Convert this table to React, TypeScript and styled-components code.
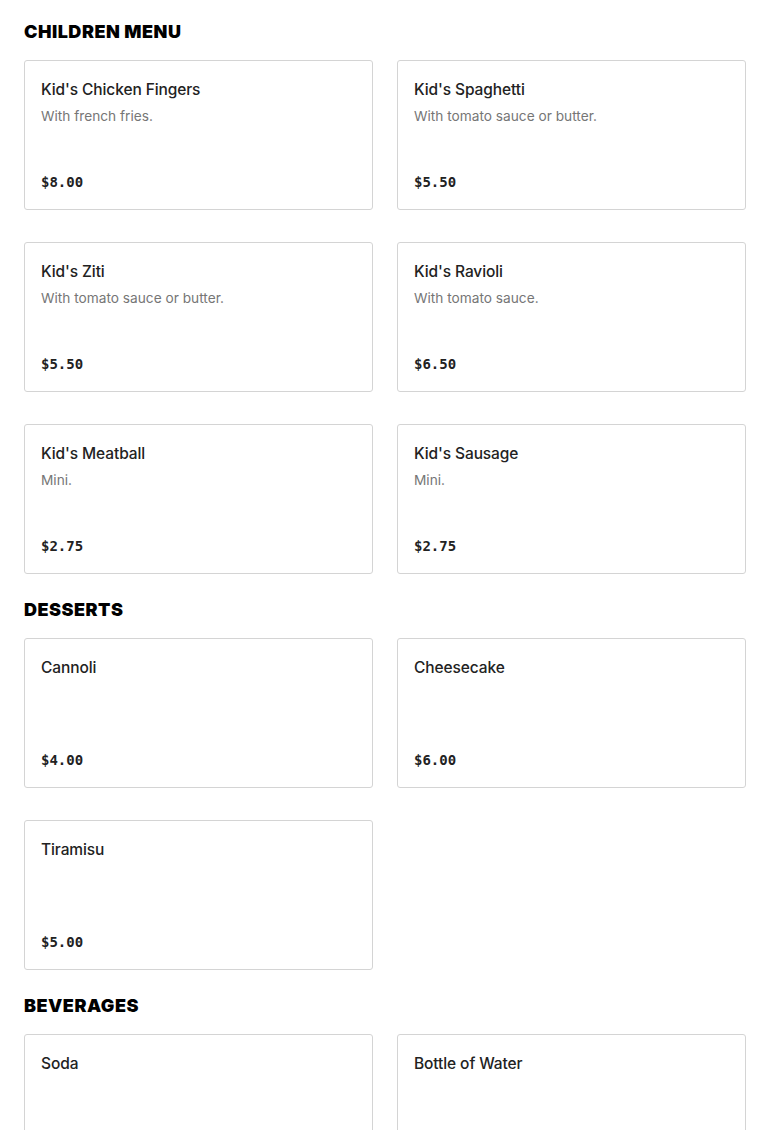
import React from "react";
import styled, { createGlobalStyle } from "styled-components";

const Global = createGlobalStyle`
  html, body { margin: 0; padding: 0; background: #fff; }
  body { font-family: Inter, "Noto Sans", sans-serif; color: #222; }
`;

const Page = styled.div`
  padding: 20px 24px 24px;
  display: flex;
  flex-direction: column;
  gap: 24px;
`;

const Section = styled.section`
  display: flex;
  flex-direction: column;
  gap: 16px;
`;

const Heading = styled.h2`
  margin: 0;
  font-family: Inter, sans-serif;
  font-weight: 900;
  font-size: 18px;
  line-height: 24px;
  letter-spacing: 0.5px;
  color: #000;
  text-transform: uppercase;
`;

const Grid = styled.div`
  display: grid;
  grid-template-columns: 1fr 1fr;
  column-gap: 24px;
  row-gap: 32px;
`;

const Card = styled.div`
  box-sizing: border-box;
  min-height: 150px;
  border: 1px solid #d4d4d4;
  border-radius: 3px;
  padding: 17px 16px 16px;
  display: flex;
  flex-direction: column;
`;

const Title = styled.div`
  font-size: 15.5px;
  font-weight: 500;
  line-height: 24px;
  color: #222;
  letter-spacing: -0.1px;
`;

const Desc = styled.div`
  margin-top: 4px;
  font-size: 13.7px;
  line-height: 20px;
  color: #767676;
`;

const Price = styled.div`
  margin-top: auto;
  padding-bottom: 1px;
  font-family: "DejaVu Sans Mono", "Liberation Mono", monospace;
  font-weight: 700;
  font-size: 14px;
  line-height: 20px;
  color: #222;
`;

type Item = { name: string; desc?: string; price?: string };

const sections: { title: string; items: Item[] }[] = [
  {
    title: "Children Menu",
    items: [
      { name: "Kid's Chicken Fingers", desc: "With french fries.", price: "$8.00" },
      { name: "Kid's Spaghetti", desc: "With tomato sauce or butter.", price: "$5.50" },
      { name: "Kid's Ziti", desc: "With tomato sauce or butter.", price: "$5.50" },
      { name: "Kid's Ravioli", desc: "With tomato sauce.", price: "$6.50" },
      { name: "Kid's Meatball", desc: "Mini.", price: "$2.75" },
      { name: "Kid's Sausage", desc: "Mini.", price: "$2.75" },
    ],
  },
  {
    title: "Desserts",
    items: [
      { name: "Cannoli", price: "$4.00" },
      { name: "Cheesecake", price: "$6.00" },
      { name: "Tiramisu", price: "$5.00" },
    ],
  },
  {
    title: "Beverages",
    items: [{ name: "Soda" }, { name: "Bottle of Water" }],
  },
];

export default function App() {
  return (
    <>
      <Global />
      <Page>
        {sections.map((s) => (
          <Section key={s.title}>
            <Heading>{s.title}</Heading>
            <Grid>
              {s.items.map((it) => (
                <Card key={it.name}>
                  <Title>{it.name}</Title>
                  {it.desc && <Desc>{it.desc}</Desc>}
                  {it.price && <Price>{it.price}</Price>}
                </Card>
              ))}
            </Grid>
          </Section>
        ))}
      </Page>
    </>
  );
}
